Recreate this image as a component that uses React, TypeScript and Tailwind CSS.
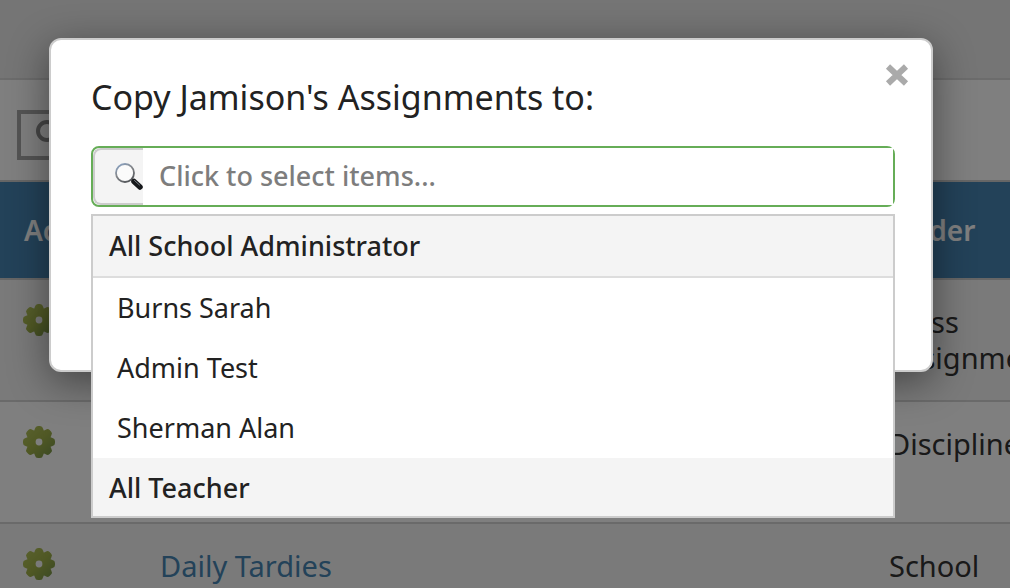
import React from 'react';
import { clsx } from 'clsx';

interface Assignment {
  name: string;
  folder: string[];
}

interface OptionGroup {
  label: string;
  options: string[];
}

const assignments: Assignment[] = [
  { name: '', folder: ['Class', 'Assignments'] },
  { name: '', folder: ['Discipline'] },
  { name: 'Daily Tardies', folder: ['School'] },
];

const groups: OptionGroup[] = [
  { label: 'All School Administrator', options: ['Burns Sarah', 'Admin Test', 'Sherman Alan'] },
  { label: 'All Teacher', options: [] },
];

const teeth = [0, 45, 90, 135, 180, 225, 270, 315];

const GearIcon: React.FC = () => (
  <svg viewBox="0 0 32 32" className="block size-8" aria-hidden="true">
    <defs>
      <linearGradient id="gear" x1="0" y1="0" x2="1" y2="1">
        <stop offset="0" stopColor="#b4c45c" />
        <stop offset="0.5" stopColor="#a0b048" />
        <stop offset="1" stopColor="#71904a" />
      </linearGradient>
      <mask id="gear-shape">
        <circle cx="16" cy="16" r="12" fill="#fff" />
        {teeth.map((angle) => (
          <path
            key={angle}
            d="M10.500 6.500L12 2.500Q12.500 0 15 0h2q2.500 0 3 2.500L21.500 6.500z"
            fill="#fff"
            transform={`rotate(${angle} 16 16)`}
          />
        ))}
        <circle cx="16" cy="16" r="3.400" fill="#000" />
      </mask>
    </defs>
    <rect width="32" height="32" fill="url(#gear)" mask="url(#gear-shape)" />
  </svg>
);

const MagnifierIcon: React.FC = () => (
  <svg viewBox="0 0 28 28" className="block size-7" aria-hidden="true">
    <defs>
      <linearGradient id="rim" x1="0" y1="0" x2="0.6" y2="1">
        <stop offset="0" stopColor="#8aa6ca" />
        <stop offset="0.5" stopColor="#85888c" />
        <stop offset="1" stopColor="#55585c" />
      </linearGradient>
    </defs>
    <path d="M16 16l3 3" stroke="#555" strokeWidth="2" />
    <circle cx="10" cy="10" r="9" fill="#fbfbfb" stroke="url(#rim)" strokeWidth="1.800" />
    <path d="M19 18.500l6 5.500" stroke="#16181b" strokeWidth="5.500" strokeLinecap="round" />
    <path d="M19.500 17.500l5 4.500" stroke="#777c82" strokeWidth="1" strokeLinecap="round" />
  </svg>
);

const CloseIcon: React.FC = () => (
  <svg viewBox="0 0 24 24" className="block size-6" aria-hidden="true">
    <path d="M3 2.500L21 19.500M21 2.500L3 19.500" stroke="#aaa" strokeWidth="6" />
  </svg>
);

const AssignmentsPage: React.FC = () => (
  <main>
    <div className="h-20 border-b-2 border-[#d8d8d8] bg-[#eaeaea]" />
    <div className="bg-white px-[17px] pt-[30px] pb-5">
      <button
        type="button"
        aria-label="Search assignments"
        className="flex h-[50px] w-20 items-start border-4 border-[#a8a8a8] px-3.5 py-1.5"
      >
        <svg viewBox="0 0 28 28" className="block size-7" aria-hidden="true">
          <circle cx="12" cy="11" r="9" fill="none" stroke="#8c8c8c" strokeWidth="4" />
          <path d="M18 18l8 8" stroke="#8c8c8c" strokeWidth="4" />
        </svg>
      </button>
    </div>
    <table className="w-full table-fixed border-separate border-spacing-0 text-left text-[29px] leading-9 text-[#333]">
      <colgroup>
        <col className="w-[136px]" />
        <col />
        <col className="w-[145px]" />
      </colgroup>
      <thead>
        <tr className="bg-[#4785b3] text-[28px] text-white">
          {['Actions', '', 'Folder'].map((heading, index) => (
            <th
              key={index}
              className="h-[100px] overflow-hidden border-y-2 border-[#ccc] px-6 font-semibold whitespace-nowrap"
            >
              {heading}
            </th>
          ))}
        </tr>
      </thead>
      <tbody>
        {assignments.map((assignment, index) => (
          <tr key={index} className={clsx('align-top', index % 2 === 0 ? 'bg-[#f5f5f5]' : 'bg-white')}>
            <td className="h-[122px] border-b-2 border-[#d4d4d4] py-6 pr-6 pl-[23px]">
              <button type="button" aria-label="Assignment settings" className="block">
                <GearIcon />
              </button>
            </td>
            <td className="border-b-2 border-[#d4d4d4] p-6">
              {assignment.name && (
                <a href="#assignment" className="text-[#4785b3]">
                  {assignment.name}
                </a>
              )}
            </td>
            <td className="overflow-hidden border-b-2 border-[#d4d4d4] py-6 pl-6 whitespace-nowrap">
              {assignment.folder.map((line) => (
                <div key={line}>{line}</div>
              ))}
            </td>
          </tr>
        ))}
      </tbody>
    </table>
  </main>
);

const RecipientSelect: React.FC = () => (
  <div className="relative">
    <div className="flex h-[61px] rounded-lg border-2 border-[#66ad57] bg-white">
      <span className="flex w-[50px] items-center justify-end rounded-l-lg border-y-2 border-l-2 border-[#ccc] bg-[#f4f4f4]">
        <MagnifierIcon />
      </span>
      <input
        type="text"
        aria-labelledby="copy-title"
        placeholder="Click to select items..."
        className="min-w-0 flex-1 bg-white px-4 text-[27px] font-medium outline-none placeholder:text-[#7d7d7d]"
      />
    </div>
    <div className="absolute inset-x-0 top-full mt-[7px] max-h-[304px] overflow-hidden border-2 border-[#ccc] bg-white text-[27px] leading-[60px] text-[#222]">
      {groups.map((group) => (
        <div key={group.label} role="group" aria-label={group.label}>
          <button
            type="button"
            className={clsx(
              'block w-full bg-[#f4f4f4] px-4 text-left font-medium',
              group.options.length > 0 && 'border-b-2 border-[#ddd]'
            )}
          >
            {group.label}
          </button>
          {group.options.map((option) => (
            <button key={option} type="button" className="block w-full px-6 text-left">
              {option}
            </button>
          ))}
        </div>
      ))}
    </div>
  </div>
);

const App: React.FC = () => (
  <div className="relative h-screen overflow-hidden font-['Noto_Sans',sans-serif]">
    <AssignmentsPage />
    <div className="absolute inset-0 bg-black/50 pt-[38px] pr-[77px] pl-[49px]">
      <div
        role="dialog"
        aria-labelledby="copy-title"
        className="rounded-xl border-2 border-[#ccc] bg-white pt-9 pr-9 pb-[163px] pl-10 shadow-[0_10px_40px_rgba(0,0,0,0.45)]"
      >
        <div className="flex items-start justify-between pb-7">
          <h1 id="copy-title" className="text-[34px] leading-[42px] text-[#222]">
            Copy Jamison's Assignments to:
          </h1>
          <button type="button" aria-label="Close" className="-mt-3 -mr-3.5">
            <CloseIcon />
          </button>
        </div>
        <RecipientSelect />
      </div>
    </div>
  </div>
);

export default App;
